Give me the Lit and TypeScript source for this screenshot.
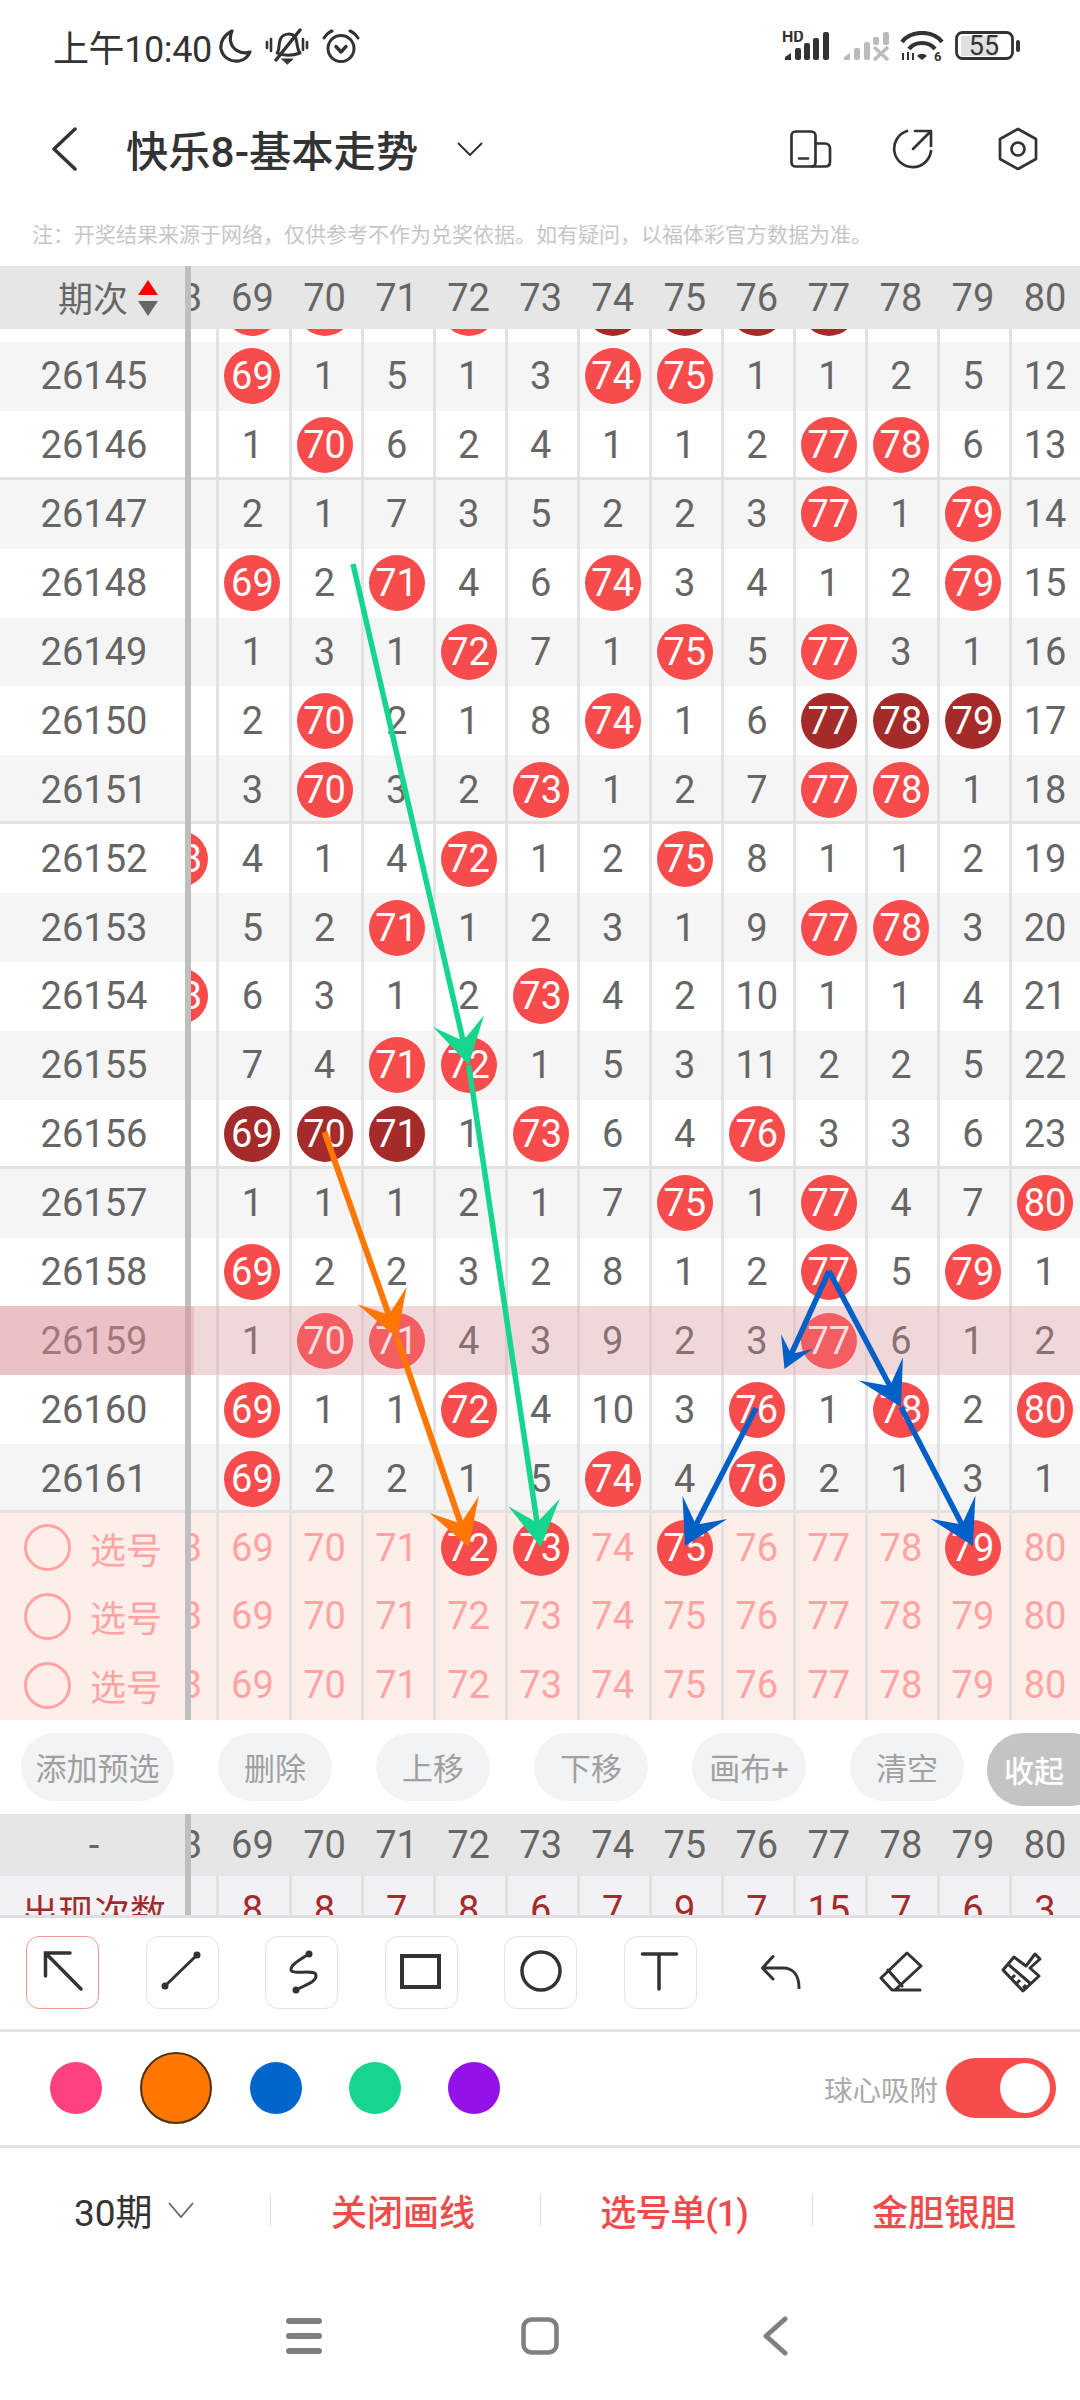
import { LitElement, css, html, svg } from 'lit';
import { customElement } from 'lit/decorators.js';

// 68..80, 'b' = red ball, 'd' = dark ball, anything else is a plain miss count
const ROWS: [string, string][] = [
  ['26145', '1 b 1 5 1 3 b b 1 1 2 5 12'],
  ['26146', '2 1 b 6 2 4 1 1 2 b b 6 13'],
  ['26147', '3 2 1 7 3 5 2 2 3 b 1 b 14'],
  ['26148', '4 b 2 b 4 6 b 3 4 1 2 b 15'],
  ['26149', '5 1 3 1 b 7 1 b 5 b 3 1 16'],
  ['26150', '6 2 b 2 1 8 b 1 6 d d d 17'],
  ['26151', '7 3 b 3 2 b 1 2 7 b b 1 18'],
  ['26152', 'b 4 1 4 b 1 2 b 8 1 1 2 19'],
  ['26153', '1 5 2 b 1 2 3 1 9 b b 3 20'],
  ['26154', 'b 6 3 1 2 b 4 2 10 1 1 4 21'],
  ['26155', '1 7 4 b b 1 5 3 11 2 2 5 22'],
  ['26156', '2 d d d 1 b 6 4 b 3 3 6 23'],
  ['26157', '3 1 1 1 2 1 7 b 1 b 4 7 b'],
  ['26158', '4 b 2 2 3 2 8 1 2 b 5 b 1'],
  ['26159', '5 1 b b 4 3 9 2 3 b 6 1 2'],
  ['26160', '6 b 1 1 b 4 10 3 b 1 b 2 b'],
  ['26161', '7 b 2 2 1 5 b 4 b 2 1 3 1'],
];
const PEEK = '1 b b 1 b 1 d d d d 1 1 1';
const PICKS = [[72, 73, 75, 79], [], []];
const COUNTS = ['', '8', '8', '7', '8', '6', '7', '9', '7', '15', '7', '6', '3'];
const COLS = Array.from({ length: 13 }, (_, i) => 68 + i);
const BUTTONS: [string, string][] = [['添加预选', 'wide'], ['删除', ''], ['上移', ''], ['下移', ''], ['画布+', ''], ['清空', '']];
const SWATCHES = ['pink', 'orange', 'blue', 'green', 'purple'];

type Pt = [number, number];

function segment(color: string, a: Pt, b: Pt, w: number) {
  const dx = b[0] - a[0];
  const dy = b[1] - a[1];
  const len = Math.hypot(dx, dy);
  const ux = dx / len;
  const uy = dy / len;
  const back = Math.min(45, len * 0.28);
  const side = back * 0.58;
  const nx = b[0] - ux * back * 0.55;
  const ny = b[1] - uy * back * 0.55;
  const p1 = `${b[0] - ux * back - uy * side},${b[1] - uy * back + ux * side}`;
  const p2 = `${b[0] - ux * back + uy * side},${b[1] - uy * back - ux * side}`;
  return svg`<line x1=${a[0]} y1=${a[1]} x2=${nx} y2=${ny} stroke=${color} stroke-width=${w} />
    <polygon fill=${color} points="${b[0]},${b[1]} ${p1} ${nx},${ny} ${p2}" />`;
}

function polyArrow(color: string, w: number, pts: Pt[]) {
  return pts.slice(1).map((p, i) => segment(color, pts[i], p, w));
}

@customElement('app-root')
export class AppRoot extends LitElement {
  static styles = css`
    :host {
      display: block;
      position: relative;
      width: 1080px;
      height: 2400px;
      overflow: hidden;
      background: #fff;
      color: #666;
      font-family: Roboto, "Noto Sans CJK SC", sans-serif;
    }
    svg { display: block; flex-shrink: 0; }

    .status {
      height: 92px;
      box-sizing: border-box;
      padding: 0 59px 0 53px;
      display: flex;
      align-items: center;
      color: #333;
    }
    .clock { font-size: 36px; letter-spacing: -0.4px; margin-right: 6px; }
    .status-left { display: flex; align-items: center; gap: 13px; }
    .status-right { display: flex; align-items: center; margin-left: auto; gap: 11px; }

    .nav {
      height: 113px;
      box-sizing: border-box;
      padding-left: 52px;
      display: flex;
      align-items: center;
    }
    .title { font-size: 42.3px; font-weight: 500; color: #333; margin-left: 48px; margin-right: 39px; }
    .nav-actions { margin-left: auto; margin-right: 42px; display: flex; align-items: center; gap: 60px; }
    .nav-actions .hex { margin-left: 4px; }
    .note {
      height: 61px;
      box-sizing: border-box;
      padding: 16px 0 0 32px;
      font-size: 21px;
      line-height: 28px;
      color: #c6c6c6;
    }

    .row {
      position: relative;
      flex-shrink: 0;
      display: flex;
      height: 68.9px;
      font-size: 38px;
    }
    .row.alt { background: #f5f5f5; }
    .row.sep { box-shadow: inset 0 -3px 0 #e2e2e2; }
    .row.pick { background: #fdeee9; color: #ffa3a3; }
    .row.head { background: #e6e6e6; height: 63px; }
    .row.head.short { height: 62px; }
    .row.stats { background: #f1f1f6; color: #a52a2a; height: 69px; }
    .fixed {
      width: 182px;
      flex-shrink: 0;
      border-right: 6px solid #bfbfbf;
      display: flex;
      align-items: center;
      justify-content: center;
      padding-left: 3px;
    }
    .sort-label { font-size: 35px; margin-right: 10px; margin-bottom: 3px; }
    .fixed.head-cell { justify-content: flex-start; width: 127px; padding-left: 58px; }
    .fixed.pick-cell { justify-content: flex-start; width: 161px; padding-left: 24px; gap: 19px; font-size: 36px; }
    .fixed.count-label { font-size: 36px; }
    .ring { width: 41px; height: 41px; border: 3px solid #ffa3a3; border-radius: 50%; flex-shrink: 0; }
    .cells { flex: 1; overflow: hidden; display: flex; }
    .cells-inner { display: flex; margin-left: -46.6px; }
    .cell {
      width: 72.05px;
      flex-shrink: 0;
      display: flex;
      align-items: center;
      justify-content: center;
      box-shadow: inset 3px 0 0 #e2e2e2;
    }
    .head .cell { box-shadow: none; }
    .ball {
      width: 56px;
      height: 56px;
      border-radius: 50%;
      display: flex;
      align-items: center;
      justify-content: center;
      background: #f84b4b;
      color: #fff;
    }
    .ball.dark { background: #a52a2a; }

    .peek, .clip {
      display: flex;
      flex-direction: column;
      overflow: hidden;
    }
    .peek { height: 13px; justify-content: flex-end; }
    .clip { height: 39px; }
    .hl {
      position: absolute;
      top: 0;
      bottom: 0;
      left: 0;
      right: 0;
      background: rgba(227, 143, 150, 0.29);
    }
    .hl.left { right: auto; width: 194px; }

    .actions {
      height: 94px;
      box-sizing: border-box;
      padding: 13px 0 0 21px;
      display: flex;
      align-items: flex-start;
      gap: 44px;
      overflow: hidden;
    }
    .btn {
      width: 114px;
      height: 68px;
      flex-shrink: 0;
      border-radius: 34px;
      background: #f2f3f5;
      color: #a0a0a0;
      font-size: 31px;
      display: flex;
      align-items: center;
      justify-content: center;
    }
    .btn.wide { width: 153px; }
    .btn.fold {
      width: 120px;
      height: 73px;
      border-radius: 36px;
      margin-left: -21px;
      background: #c4c4c4;
      color: #fff;
      font-size: 30px;
      font-weight: 500;
      justify-content: flex-start;
      padding-left: 17px;
      box-sizing: border-box;
    }

    .tools {
      height: 117px;
      box-sizing: border-box;
      border-top: 3px solid #e0e0e0;
      border-bottom: 3px solid #e3e3e3;
      padding: 18px 0 0 26px;
      display: flex;
      align-items: flex-start;
      gap: 46.6px;
    }
    .tool {
      width: 73px;
      height: 73px;
      flex-shrink: 0;
      box-sizing: border-box;
      border: 1.5px solid #e4e4e4;
      border-radius: 13px;
    }
    .tool.on { border-color: #ef9a9a; }
    .tool svg { margin: -1.5px; }
    .tool-extras { display: flex; align-items: center; height: 73px; margin-left: 17px; }
    .tool-extras .eraser { margin-left: 78px; }
    .tool-extras .brush { margin-left: 78px; }

    .colors {
      height: 116px;
      box-sizing: border-box;
      border-bottom: 3px solid #e3e3e3;
      padding: 0 24px 0 50px;
      display: flex;
      align-items: center;
      gap: 47px;
    }
    .swatch { width: 52px; height: 52px; border-radius: 50%; flex-shrink: 0; }
    .swatch.pink { background: #ff4081; }
    .swatch.orange { background: #ff7700; width: 68px; height: 68px; border: 2px solid #4d2f0c; margin: 0 -9px; }
    .swatch.blue { background: #0066cc; }
    .swatch.green { background: #16d68f; }
    .swatch.purple { background: #9411e8; }
    .snap { margin-left: auto; display: flex; align-items: center; gap: 8px; font-size: 28.5px; color: #aaa; }
    .toggle {
      width: 110px;
      height: 60px;
      box-sizing: border-box;
      border-radius: 30px;
      background: #f84b4b;
      padding: 5px 6px 5px 54px;
    }
    .knob { width: 50px; height: 50px; border-radius: 50%; background: #fff; }

    .bottom {
      height: 124px;
      display: flex;
      align-items: center;
      font-size: 36px;
      color: #ef4b4b;
      font-weight: 500;
    }
    .bottom > div {
      height: 32px;
      box-sizing: border-box;
      display: flex;
      align-items: center;
      justify-content: center;
      border-left: 1.5px solid #ddd;
      flex: 0 0 270px;
      padding-right: 5px;
    }
    .bottom > div.range {
      flex: 0 0 270px;
      border-left: 0;
      color: #333;
      font-weight: 400;
      font-size: 37px;
      gap: 15px;
      justify-content: flex-start;
      padding-left: 74px;
    }
    .bottom > div.list { flex-basis: 272px; letter-spacing: -1px; }
    .bottom > div.last { flex-basis: 268px; }

    .sysnav {
      display: flex;
      align-items: center;
      padding: 44px 0 0 286px;
    }
    .sysnav .home { margin-left: 199px; }
    .sysnav .back { margin-left: 203px; }

    .drawing { position: absolute; left: 0; top: 0; pointer-events: none; }
  `;

  private cells(tokens: string[], pick = false) {
    return html`<div class="cells"><div class="cells-inner">
      ${COLS.map((col, i) => {
        const t = tokens[i];
        if (t === 'b' || t === 'd') {
          return html`<div class="cell"><span class="ball ${t === 'd' ? 'dark' : ''}">${col}</span></div>`;
        }
        return html`<div class="cell">${pick ? col : t}</div>`;
      })}
    </div></div>`;
  }

  private dataRow(num: string, data: string, alt: boolean, sep: boolean) {
    const hot = num === '26159';
    return html`<div class="row ${alt ? 'alt' : ''} ${sep ? 'sep' : ''}">
      <div class="fixed">${num}</div>
      ${this.cells(data.split(' '))}
      ${hot ? html`<div class="hl"></div><div class="hl left"></div>` : ''}
    </div>`;
  }

  private statusIcons() {
    return html`
      <svg width="34" height="36" viewBox="0 0 34 36" fill="none" stroke="#333" stroke-width="3.200" stroke-linejoin="round">
        <path d="M14 3 C6 7 2 14 3 21 C5 30 13 34 21 33 C26 32 30 29 32 24 C22 27 14 21 12.500 13 C12 9 12.600 6 14 3 Z" />
      </svg>
      <svg width="44" height="37" viewBox="0 0 44 37" fill="none" stroke="#333" stroke-width="3" stroke-linecap="round" stroke-linejoin="round">
        <path d="M12 25 C15 22 13 15 16 10 C19 5 27 5 30 9 C33 13 31 20 35 25 C28 28 18 28 12 25 Z" />
        <path d="M17 31 H28 L22.500 36 Z" fill="#333" stroke-width="1" />
        <path d="M35 2 L11 32" stroke-width="3.400" />
        <path d="M6 11 V23 M2 14 V20 M38 11 V22 M42 14 V20" stroke-width="2.600" />
      </svg>
      <svg width="38" height="34" viewBox="0 0 38 34" fill="none" stroke="#333" stroke-width="3" stroke-linecap="round" stroke-linejoin="round">
        <circle cx="19" cy="19.500" r="13" />
        <path d="M2 9 C4 6 7 3 10 2 M36 9 C34 6 31 3 28 2" />
        <path d="M14 17.500 L19 23 L24 17.500" stroke-width="3.400" />
      </svg>`;
  }

  private networkIcons() {
    return html`
      <svg width="50" height="30" viewBox="0 0 50 30" fill="#333">
        <text x="0" y="11" font-size="16" font-weight="700" font-family="Roboto, sans-serif">HD</text>
        <path d="M3 29 L3 26 L9 22 V29 Z" />
        <rect x="13" y="17" width="6" height="12" rx="2" />
        <rect x="22" y="12" width="6" height="17" rx="2" />
        <rect x="31" y="7" width="6" height="22" rx="2" />
        <rect x="41" y="1" width="6" height="28" rx="2" />
      </svg>
      <svg width="46" height="30" viewBox="0 0 46 30" fill="#bbb">
        <path d="M1 29 L1 26 L7 22 V29 Z" />
        <rect x="11" y="17" width="6" height="12" rx="2" />
        <rect x="21" y="11" width="6" height="18" rx="2" />
        <rect x="30" y="6" width="6" height="8" rx="2" />
        <rect x="40" y="1" width="6" height="13" rx="2" />
        <path d="M31 16 L45 29 M45 16 L31 29" stroke="#bbb" stroke-width="3.500" />
      </svg>
      <svg width="44" height="30" viewBox="0 0 44 30" fill="none" stroke="#333" stroke-width="4.200">
        <path d="M2 11 C11 -1 33 -1 42 11" />
        <path d="M9 18 C15 10 29 10 35 18" />
        <path d="M17 25 L22 29 L27 25 C24 22 20 22 17 25 Z" fill="#333" stroke="none" />
        <path d="M3 22 V29 M8 21 V29 M13 22 V29" stroke-width="2" />
        <text x="34" y="29.500" font-size="13" font-weight="700" fill="#333" stroke="none" font-family="Roboto, sans-serif">6</text>
      </svg>
      <svg width="66" height="30" viewBox="0 0 66 30" fill="none">
        <rect x="6" y="5" width="35" height="20" fill="#e0e0e0" />
        <rect x="1.500" y="1.500" width="56" height="26" rx="6" stroke="#333" stroke-width="2.800" />
        <text x="29" y="24" text-anchor="middle" font-size="27" fill="#333" font-family="Roboto, sans-serif">55</text>
        <rect x="61" y="9" width="4" height="12" rx="2" fill="#333" />
      </svg>`;
  }

  private tool(inner: unknown, on = false) {
    return html`<div class="tool ${on ? 'on' : ''}">
      <svg width="73" height="73" viewBox="0 0 73 73" fill="none" stroke="#333" stroke-width="3.500" stroke-linecap="round">${inner}</svg>
    </div>`;
  }

  render() {
    return html`
      <div class="status">
        <div class="clock">上午10:40</div>
        <div class="status-left">${this.statusIcons()}</div>
        <div class="status-right">${this.networkIcons()}</div>
      </div>

      <div class="nav">
        <svg width="26" height="44" viewBox="0 0 26 44" fill="none" stroke="#333" stroke-width="3.500" stroke-linecap="round" stroke-linejoin="round">
          <path d="M23 2 L2 22 L23 42" />
        </svg>
        <div class="title">快乐8-基本走势</div>
        <svg width="26" height="14" viewBox="0 0 26 14" fill="none" stroke="#333" stroke-width="2">
          <path d="M1 1 L13 13 L25 1" />
        </svg>
        <div class="nav-actions">
          <svg width="42" height="38" viewBox="0 0 42 38" fill="none" stroke="#333" stroke-width="2.700" stroke-linecap="round" stroke-linejoin="round">
            <rect x="1.500" y="1.500" width="24" height="35" rx="4" />
            <path d="M25.500 13.500 H35 C38 13.500 40 15.500 40 18.500 V32 C40 35 38 36.500 35 36.500 H22" />
            <path d="M9 28.500 H18" />
          </svg>
          <svg width="42" height="42" viewBox="0 0 42 42" fill="none" stroke="#333" stroke-width="2.700" stroke-linecap="round" stroke-linejoin="round">
            <path d="M15 3 A18.500 18.500 0 1 0 39 23" />
            <path d="M21 21 L39 3 M23 3 H39 V18" />
          </svg>
          <svg class="hex" width="40" height="44" viewBox="0 0 40 44" fill="none" stroke="#333" stroke-width="2.700" stroke-linejoin="round">
            <path d="M20 2 L38 12 V32 L20 42 L2 32 V12 Z" />
            <circle cx="20" cy="22" r="6.500" />
          </svg>
        </div>
      </div>

      <div class="note">注：开奖结果来源于网络，仅供参考不作为兑奖依据。如有疑问，以福体彩官方数据为准。</div>

      <div class="row head">
        <div class="fixed head-cell">
          <span class="sort-label">期次</span>
          <svg width="20" height="36" viewBox="0 0 20 36">
            <path d="M10 0 L20 15 H0 Z" fill="#f00" />
            <path d="M0 21 H20 L10 36 Z" fill="#666" />
          </svg>
        </div>
        ${this.cells(COLS.map(c => String(c)))}
      </div>

      <div class="peek">
        <div class="row">
          <div class="fixed">26144</div>
          ${this.cells(PEEK.split(' '))}
        </div>
      </div>

      ${ROWS.map(([num, data], i) => this.dataRow(num, data, i % 2 === 0, i % 5 === 1))}

      ${PICKS.map(picked => html`
        <div class="row pick">
          <div class="fixed pick-cell"><span class="ring"></span><span>选号</span></div>
          ${this.cells(COLS.map(c => (picked.includes(c) ? 'b' : String(c))))}
        </div>`)}

      <div class="actions">
        ${BUTTONS.map(([label, cls]) => html`<div class="btn ${cls}">${label}</div>`)}
        <div class="btn fold">收起</div>
      </div>

      <div class="row head short">
        <div class="fixed">-</div>
        ${this.cells(COLS.map(c => String(c)))}
      </div>
      <div class="clip">
        <div class="row stats">
          <div class="fixed count-label">出现次数</div>
          ${this.cells(COUNTS)}
        </div>
      </div>

      <div class="tools">
        ${this.tool(svg`<path d="M19.500 41 V18 H44 M19.500 18 L55 54" />`, true)}
        ${this.tool(svg`<path d="M52 20 L20 51" stroke-width="3" /><circle cx="52" cy="20" r="3.500" fill="#333" stroke="none" /><circle cx="20" cy="51" r="3.500" fill="#333" stroke="none" />`)}
        ${this.tool(svg`<path d="M44 19 C36 24 25 30 26 35 C27 40 50 34 51 40 C52 47 40 50 31 55" stroke-width="3" /><circle cx="44" cy="19" r="3.500" fill="#333" stroke="none" /><circle cx="31" cy="55" r="3.500" fill="#333" stroke="none" />`)}
        ${this.tool(svg`<rect x="18" y="21" width="37" height="31" stroke-width="4" stroke-linecap="butt" />`)}
        ${this.tool(svg`<circle cx="37" cy="36" r="19" />`)}
        ${this.tool(svg`<path d="M19.500 19 H53.500 M36 19 V54" />`)}
        <div class="tool-extras">
          <svg width="40" height="34" viewBox="0 0 40 34" fill="none" stroke="#333" stroke-width="3" stroke-linecap="round" stroke-linejoin="round">
            <path d="M12 1.500 L1.500 13 L12 24 M1.500 13 H22 C32 13 38 20 38 33" />
          </svg>
          <svg class="eraser" width="44" height="42" viewBox="0 0 44 42" fill="none" stroke="#333" stroke-width="3" stroke-linecap="round" stroke-linejoin="round">
            <path d="M28 2 L42 15 L16 39 H13 L2 27 Z M9 19 L23 35 M15 39 H41" />
          </svg>
          <svg class="brush" width="41" height="41" viewBox="0 0 41 41" fill="none" stroke="#333" stroke-width="3" stroke-linejoin="round">
            <path d="M2 18 L13 5 L25 14 L34 2 L39 7 L29 16 L38 24 L22 39 Z" />
            <path d="M8 13 L30 32 M14 23 L11 26 M19 28 L16 31 M25 33 L22 36" />
          </svg>
        </div>
      </div>

      <div class="colors">
        ${SWATCHES.map(s => html`<div class="swatch ${s}"></div>`)}
        <div class="snap">
          <span>球心吸附</span>
          <div class="toggle"><div class="knob"></div></div>
        </div>
      </div>

      <div class="bottom">
        <div class="range">
          <span>30期</span>
          <svg width="26" height="16" viewBox="0 0 26 16" fill="none" stroke="#666" stroke-width="1.800"><path d="M1 1 L13 15 L25 1" /></svg>
        </div>
        <div>关闭画线</div>
        <div class="list">选号单(1)</div>
        <div class="last">金胆银胆</div>
      </div>

      <div class="sysnav">
        <svg width="36" height="36" viewBox="0 0 36 36" fill="#808080">
          <rect y="0" width="36" height="6" rx="3" />
          <rect y="15" width="36" height="6" rx="3" />
          <rect y="30" width="36" height="6" rx="3" />
        </svg>
        <svg class="home" width="38" height="38" viewBox="0 0 38 38" fill="none" stroke="#808080" stroke-width="4.500">
          <rect x="2.500" y="2.500" width="33" height="33" rx="8" />
        </svg>
        <svg class="back" width="26" height="40" viewBox="0 0 26 40" fill="none" stroke="#808080" stroke-width="5" stroke-linecap="round" stroke-linejoin="round">
          <path d="M23 3 L4 20 L23 37" />
        </svg>
      </div>

      <svg class="drawing" width="1080" height="2400" viewBox="0 0 1080 2400">
        ${polyArrow('#16d68f', 5.5, [[353, 564], [468.7, 1065], [540.7, 1547]])}
        ${polyArrow('#ff7700', 6, [[324.5, 1132], [397, 1338], [468.7, 1547]])}
        ${polyArrow('#0060c8', 5.5, [[829, 1271], [784.5, 1369]])}
        ${polyArrow('#0060c8', 5.5, [[829, 1271], [901, 1407], [973, 1546]])}
        ${polyArrow('#0060c8', 5.5, [[756, 1408], [685, 1546]])}
      </svg>
    `;
  }
}
